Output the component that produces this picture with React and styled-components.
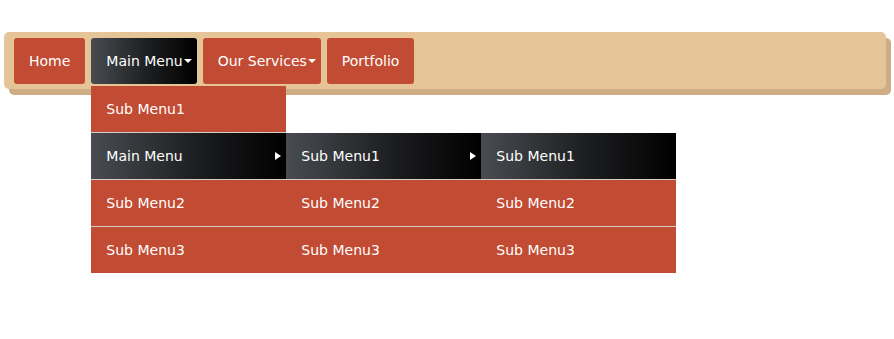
import React from 'react';
import styled, { createGlobalStyle, css } from 'styled-components';

const GlobalStyle = createGlobalStyle`
  body {
    margin: 0;
    background: #fff;
    font-family: "DejaVu Sans", Verdana, sans-serif;
  }
`;

const darkGradient = css`
  background: linear-gradient(to right, #484c51 0%, #1c1d1f 55%, #000 100%);
`;

const Page = styled.div`
  padding: 32px 8px 0 4px;
  height: 307px;
`;

const NavBar = styled.nav`
  background: #e5c597;
  border-radius: 5px;
  box-shadow: 5px 6px 0 #cfad84;
  padding: 6px 10px 5px;
`;

const NavList = styled.ul`
  display: flex;
  gap: 6px;
  list-style: none;
  margin: 0;
  padding: 0;
`;

const NavItem = styled.li`
  position: relative;
`;

const NavButton = styled.a`
  display: flex;
  align-items: center;
  height: 46px;
  padding: ${(p) => (p.$caret ? '0 5px 0 15px' : '0 15px')};
  border-radius: 3px;
  color: #fff;
  font-size: 14px;
  text-decoration: none;
  background: #c24b33;
  ${(p) => p.$active && darkGradient}
`;

const DownCaret = styled.span`
  width: 0;
  height: 0;
  margin-left: 1px;
  border-left: 4px solid transparent;
  border-right: 4px solid transparent;
  border-top: 4px solid #fff;
`;

const SubMenu = styled.ul`
  position: absolute;
  top: ${(p) => (p.$nested ? '0' : '48px')};
  left: ${(p) => (p.$nested ? '100%' : '0')};
  width: 195px;
  margin: 0;
  padding: 0;
  list-style: none;
  z-index: 2;
`;

const SubItem = styled.li`
  position: relative;
  border-bottom: 1px solid #d6ccc8;

  &:last-child {
    border-bottom: none;
  }
`;

const SubLink = styled.a`
  display: flex;
  align-items: center;
  justify-content: space-between;
  height: 46px;
  padding: 0 5px 0 15px;
  color: #fff;
  font-size: 14px;
  text-decoration: none;
  background: #c24b33;
  ${(p) => p.$active && darkGradient}
`;

const RightCaret = styled.span`
  width: 0;
  height: 0;
  border-top: 4px solid transparent;
  border-bottom: 4px solid transparent;
  border-left: 6px solid #fff;
`;

const Column = ({ deep }) => (
  <SubMenu $nested>
    <SubItem>
      <SubLink href="#" $active>
        Sub Menu1
        {deep > 0 && <RightCaret />}
      </SubLink>
      {deep > 0 && <Column deep={deep - 1} />}
    </SubItem>
    <SubItem>
      <SubLink href="#">Sub Menu2</SubLink>
    </SubItem>
    <SubItem>
      <SubLink href="#">Sub Menu3</SubLink>
    </SubItem>
  </SubMenu>
);

const App = () => (
  <>
    <GlobalStyle />
    <Page>
      <NavBar>
        <NavList>
          <NavItem>
            <NavButton href="#">Home</NavButton>
          </NavItem>
          <NavItem>
            <NavButton href="#" $caret $active>
              Main Menu<DownCaret />
            </NavButton>
            <SubMenu>
              <SubItem>
                <SubLink href="#">Sub Menu1</SubLink>
              </SubItem>
              <SubItem>
                <SubLink href="#" $active>
                  Main Menu
                  <RightCaret />
                </SubLink>
                <Column deep={1} />
              </SubItem>
              <SubItem>
                <SubLink href="#">Sub Menu2</SubLink>
              </SubItem>
              <SubItem>
                <SubLink href="#">Sub Menu3</SubLink>
              </SubItem>
            </SubMenu>
          </NavItem>
          <NavItem>
            <NavButton href="#" $caret>
              Our Services<DownCaret />
            </NavButton>
          </NavItem>
          <NavItem>
            <NavButton href="#">Portfolio</NavButton>
          </NavItem>
        </NavList>
      </NavBar>
    </Page>
  </>
);

export default App;
